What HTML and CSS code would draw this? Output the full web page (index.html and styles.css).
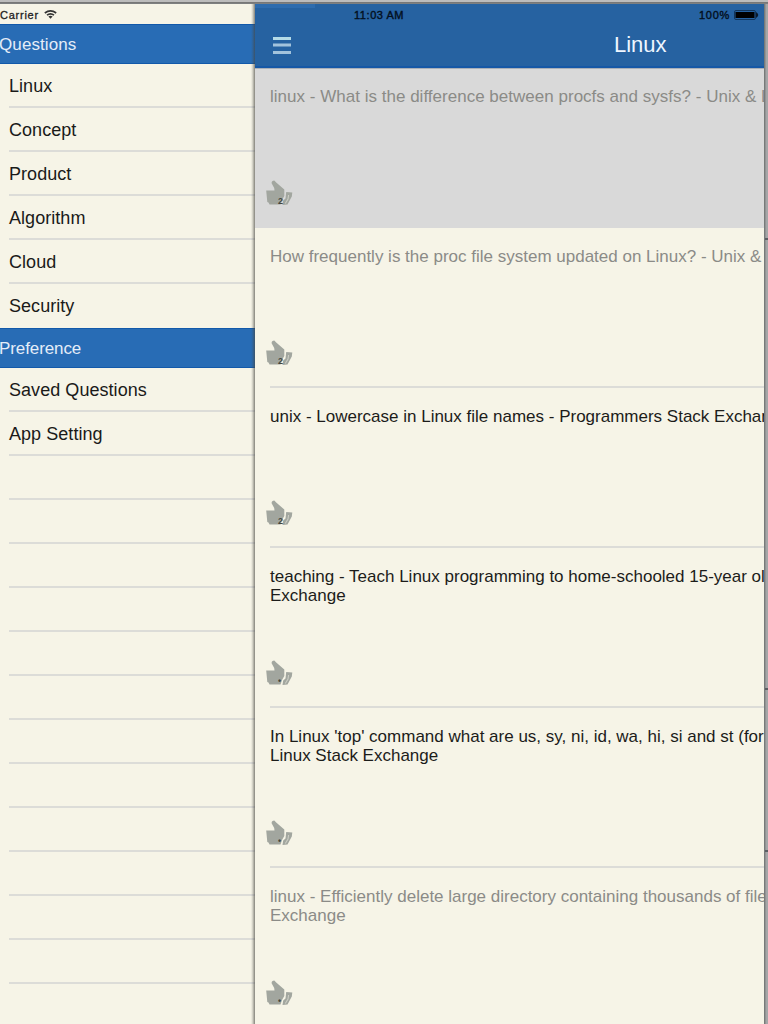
FILE: index.html
```html
<!DOCTYPE html>
<html lang="en">
<head>
<meta charset="utf-8">
<title>Linux</title>
<link rel="stylesheet" href="styles.css">
</head>
<body>
<svg width="0" height="0" class="defs">
  <symbol id="thumb" viewBox="0 0 27 28">
    <path fill="#a2a69f" d="M.2 10.400H8.500L8.200 8 5.600 3.200Q5.500 .4 8.300 .4L10.200 2.600 18.300 9.500V16L16 20 14.500 24.500H3.500L2.500 22.500 1.300 22Z"/>
    <path fill="#a2a69f" d="M20.200 12 26.300 12.600 25.800 16.500 21.500 24.500 16.500 25 17.200 20.500 19.500 18.500Z"/>
    <path fill="none" stroke="#cbcdc4" stroke-width="1.100" d="M22.600 15 22 19 19.300 23.500"/>
  </symbol>
</svg>
<div class="screen">
  <div class="edge-top"></div>
  <nav class="side">
    <div class="status"><span class="carrier">Carrier</span>
      <svg class="wifi" width="13" height="9" viewBox="0 0 13 9"><path d="M.8 3Q6.500-1.200 12.200 3M3 5.200Q6.500 2.500 10 5.200" fill="none" stroke="#333" stroke-width="1.600"/><path d="M4.400 6.400Q6.500 4.900 8.600 6.400L6.500 8.800Z" fill="#333"/></svg>
    </div>
    <h2 class="sect"><span class="s1">Questions</span></h2>
    <ul class="menu">
      <li>Linux</li><li>Concept</li><li>Product</li><li>Algorithm</li><li>Cloud</li><li class="last">Security</li>
    </ul>
    <h2 class="sect"><span class="s2">Preference</span></h2>
    <ul class="menu">
      <li>Saved Questions</li><li>App Setting</li><li></li><li></li><li></li><li></li><li></li><li></li><li></li><li></li><li></li><li></li><li></li><li></li><li></li>
    </ul>
  </nav>
  <main class="detail">
    <header class="bar">
      <span class="glint"></span>
      <div class="bar-status">
        <span class="time">11:03 AM</span>
        <span class="pct">100%</span>
        <svg class="batt" width="25" height="10" viewBox="0 0 25 10"><rect x=".5" y=".5" width="21" height="9" rx="1.500" fill="none" stroke="#12365c"/><rect x="1.500" y="2" width="19" height="6" fill="#000"/><path d="M22 2Q26.500 5 22 8Z" fill="#0b1a2c"/></svg>
      </div>
      <div class="bar-title">
        <svg class="burger" width="18" height="18" viewBox="0 0 18 18"><path fill="#b5dbe7" d="M0 0h18v3H0z"/><path fill="#a3c3dc" d="M0 6.500h18v3H0zM0 14h18v3H0z"/></svg>
        <h1>Linux</h1>
      </div>
    </header>
    <article class="q read selected"><p><span class="q1">linux - What is the difference between procfs and sysfs? - Unix &amp; Linux</span></p><div class="like"><svg><use href="#thumb"/></svg><b>2</b></div></article>
    <article class="q read"><p><span class="q2">How frequently is the proc file system updated on Linux? - Unix &amp;</span></p><div class="like"><svg><use href="#thumb"/></svg><b>2</b></div></article>
    <article class="q"><p><span class="q3">unix - Lowercase in Linux file names - Programmers Stack Exchange</span></p><div class="like"><svg><use href="#thumb"/></svg><b>2</b></div></article>
    <article class="q"><p><span>teaching - Teach Linux programming to home-schooled 15-year old</span><br><span class="q4b">Exchange</span></p><div class="like"><svg><use href="#thumb"/></svg><b>•</b></div></article>
    <article class="q"><p><span>In Linux 'top' command what are us, sy, ni, id, wa, hi, si and st (for</span><br><span>Linux Stack Exchange</span></p><div class="like"><svg><use href="#thumb"/></svg><b>•</b></div></article>
    <article class="q read"><p><span class="q6">linux - Efficiently delete large directory containing thousands of files</span><br><span class="q4b">Exchange</span></p><div class="like"><svg><use href="#thumb"/></svg><b>•</b></div></article>
  </main>
  <aside class="edge-right"><i></i><i></i><i></i></aside>
</div>
</body>
</html>
```
FILE: styles.css
```css
* { box-sizing: border-box; margin: 0; padding: 0; }
body { width: 768px; height: 1024px; overflow: hidden; background: #f6f4e7; font-family: "Liberation Sans", Arial, sans-serif; }
.defs { position: absolute; }
.screen { display: grid; grid-template-columns: 255px 509px 4px; grid-template-rows: 4px 1020px; height: 1024px; overflow: hidden; }
.edge-top { grid-column: 1 / 4; background: linear-gradient(#bcbcbc 0 2px, #777 2px 3px, #7d7f80 3px 4px); }
.side { position: relative; overflow: hidden; }
.side::after { content: ""; position: absolute; right: 0; top: 0; width: 4px; height: 100%; background: linear-gradient(90deg, rgba(70,70,65,0), rgba(70,70,65,.2) 40%, rgba(70,70,65,.65)); }
.status { height: 20px; display: flex; align-items: center; gap: 5px; padding-top: 1px; color: #222; font-size: 11px; white-space: nowrap; -webkit-text-stroke: .3px; }
.carrier { letter-spacing: .75px; }
.sect { height: 40px; display: flex; align-items: center; background: #286cb5; border: solid #1259aa; border-width: 1px 0; color: #e4edf8; font-size: 17px; font-weight: 400; white-space: nowrap; }
.s1 { margin-left: -1px; letter-spacing: .1px; padding-top: 1px; }
.s2 { margin-left: -1px; letter-spacing: -.1px; padding-top: 1px; }
.menu { list-style: none; padding-left: 9px; }
.menu li { height: 44px; line-height: 44px; font-size: 18px; letter-spacing: .05px; color: #1a1a19; border-bottom: 2px solid #dcdcd8; white-space: nowrap; }
.menu li.last { border-color: transparent; }
.detail { overflow: hidden; }
.bar { position: relative; height: 64px; background: #2662a1; border-bottom: 2px solid #1658a6; color: #eff6ff; }
.glint { position: absolute; left: 0; top: 0; width: 60px; height: 4px; background: #2e6cae; }
.bar-status { display: flex; align-items: center; height: 22px; padding-left: 99px; color: #03101f; font-size: 11px; -webkit-text-stroke: .4px; }
.time { width: 345px; letter-spacing: .55px; }
.pct { width: 35px; letter-spacing: .7px; }
.bar-title { display: flex; align-items: center; height: 40px; padding-left: 18px; }
.burger { margin-right: 323px; }
h1 { font-size: 22px; font-weight: 400; line-height: 36px; margin-top: -2px; }
.q { height: 160px; padding-top: 19px; color: #1c1c1a; font-size: 17px; line-height: 19px; display: flex; flex-direction: column; position: relative; }
.q p { height: 93px; margin-left: 15px; white-space: nowrap; }
.q::after { content: ""; position: absolute; left: 15px; right: 0; bottom: 0; height: 2px; background: #dcdcd8; }
.q1 { letter-spacing: .015px; }
.read { color: #8b8b87; }
.selected { background: #d9d9d9; box-shadow: inset 0 1px #aab0b8; }
.selected::after { left: 0; background: #d9d9d9; }
.like { position: relative; margin-left: 11px; width: 27px; height: 28px; }
.like svg { width: 27px; height: 28px; display: block; }
.like b { position: absolute; left: 12px; top: 16px; font-size: 9px; line-height: 10px; color: #44483f; }
.edge-right { position: relative; background: linear-gradient(90deg, #777a79 0 1px, #929394 1px 2px, #a5a6a7 2px); }
.edge-right i { position: absolute; left: 1px; width: 3px; height: 2px; background: #5c5f64; top: 234px; }
.edge-right i:nth-child(2) { top: 684px; }
.edge-right i:nth-child(3) { top: 846px; }
```
